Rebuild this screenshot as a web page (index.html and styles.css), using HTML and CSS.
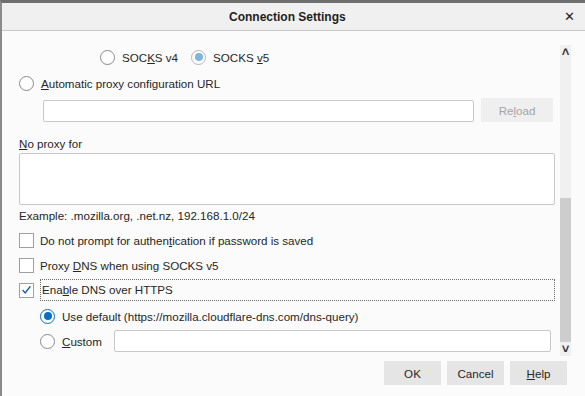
FILE: index.html
```html
<!DOCTYPE html>
<html lang="en">
<head>
  <meta charset="UTF-8">
  <title>Connection Settings</title>
  <link rel="stylesheet" href="styles.css">
</head>
<body>
  <div class="window">
    <header class="titlebar">
      <span class="title">Connection Settings</span>
      <span class="close">&#x2715;</span>
    </header>

    <div class="pane">
      <div class="content">
        <div class="row socks">
          <span class="radio"></span>
          <span class="label">SOC<u>K</u>S v4</span>
          <span class="radio checked disabled"></span>
          <span class="label">SOCKS <u>v</u>5</span>
        </div>

        <div class="row">
          <span class="radio"></span>
          <span class="label"><u>A</u>utomatic proxy configuration URL</span>
        </div>

        <div class="url-row">
          <div class="field url"></div>
          <button class="btn disabled">Re<u>l</u>oad</button>
        </div>

        <div class="caption"><u>N</u>o proxy for</div>
        <div class="field area"></div>
        <div class="hint">Example: .mozilla.org, .net.nz, 192.168.1.0/24</div>

        <div class="row check-row">
          <span class="checkbox"></span>
          <span class="label">Do not prompt for authen<u>t</u>ication if password is saved</span>
        </div>

        <div class="row check-row">
          <span class="checkbox"></span>
          <span class="label">Proxy <u>D</u>NS when using SOCKS v5</span>
        </div>

        <div class="row check-row doh">
          <span class="checkbox">
            <svg width="14" height="14" viewBox="0 0 14 14"><path d="M2.8 7 L5.6 10.2 L11.2 3" fill="none" stroke="#1a5fb4" stroke-width="1.5"/></svg>
          </span>
          <span class="label focused">Ena<u>b</u>le DNS over HTTPS</span>
        </div>

        <div class="row sub">
          <span class="radio checked"></span>
          <span class="label">Use default (https://mozilla.cloudflare-dns.com/dns-query)</span>
        </div>

        <div class="row sub">
          <span class="radio"></span>
          <span class="label custom-label"><u>C</u>ustom</span>
          <div class="field custom"></div>
        </div>
      </div>

      <div class="scrollbar">
        <span class="arrow">&#x2C4;</span>
        <div class="thumb"></div>
        <span class="arrow">&#x2C5;</span>
      </div>
    </div>

    <footer class="buttons">
      <button class="btn">OK</button>
      <button class="btn">Cancel</button>
      <button class="btn"><u>H</u>elp</button>
    </footer>
  </div>
</body>
</html>
```

FILE: styles.css
```css
* {
  margin: 0;
  padding: 0;
  box-sizing: border-box;
}
html, body {
  width: 585px;
  height: 396px;
  overflow: hidden;
  background-color: #fbfbfb;
  font-family: "Liberation Sans", Arial, sans-serif;
  font-size: 11.6px;
  color: #262626;
}
u {
  text-decoration-thickness: 1px;
  text-underline-offset: 1px;
}
.window {
  height: 396px;
  border-top: 3px solid #6f6f6f;
  border-left: 2px solid #8a8a8a;
  background-color: #fbfbfb;
}
.titlebar {
  height: 28px;
  background-color: #f0f0f0;
  border-bottom: 1px solid #c9c9c9;
  display: flex;
  align-items: center;
  padding-left: 227px;
  padding-right: 10px;
}
.title {
  font-weight: bold;
  font-size: 12px;
  color: #1e1e1e;
  flex: 1;
}
.close {
  font-size: 13px;
  color: #222;
}
.pane {
  height: 325px;
  display: flex;
}
.content {
  flex: 1;
  padding-left: 17px;
  padding-top: 15px;
}
.row {
  height: 22px;
  display: flex;
  align-items: center;
  margin-bottom: 4px;
}
.socks {
  padding-left: 81px;
  margin-bottom: 4px;
}
.socks .label {
  margin-right: 13px;
}
.radio {
  width: 15px;
  height: 15px;
  border: 1px solid #8a8a8a;
  border-radius: 50%;
  background-color: #fff;
  margin-right: 7px;
  flex-shrink: 0;
  display: flex;
  align-items: center;
  justify-content: center;
}
.radio.checked {
  border-color: #0a6fc2;
}
.radio.checked::after {
  content: "";
  width: 8px;
  height: 8px;
  border-radius: 50%;
  background-color: #0a6fc2;
}
.radio.disabled {
  border-color: #b5b5b5;
}
.radio.disabled::after {
  background-color: #7fb4dc;
}
.url-row {
  display: flex;
  align-items: center;
  padding-left: 24px;
  margin-top: 1px;
  height: 24px;
}
.field {
  background-color: #fff;
  border: 1px solid #c8c8c8;
  border-radius: 2px;
}
.url {
  width: 431px;
  height: 22px;
  margin-top: 1px;
}
.btn {
  height: 24px;
  width: 57px;
  border: none;
  background-color: #e5e5e5;
  font-family: inherit;
  font-size: 11.6px;
  color: #262626;
}
.btn.disabled {
  width: 72px;
  margin-left: 7px;
  background-color: #efefef;
  color: #a4a4a4;
}
.caption {
  margin-top: 12px;
  height: 19px;
  line-height: 19px;
}
.area {
  width: 536px;
  height: 52px;
}
.hint {
  margin-top: 1px;
  height: 20px;
  line-height: 20px;
  margin-bottom: 3px;
}
.check-row {
  margin-bottom: 3px;
}
.doh {
  margin-top: 2px;
  margin-bottom: 4px;
}
.checkbox {
  width: 15px;
  height: 15px;
  border: 1px solid #a0a0a0;
  background-color: #fff;
  margin-right: 6px;
  flex-shrink: 0;
  display: flex;
  align-items: center;
  justify-content: center;
}
.focused {
  flex: 1;
  margin-right: 3px;
  height: 22px;
  line-height: 20px;
  border: 1px dotted #6a6a6a;
  padding-left: 1px;
}
.sub {
  padding-left: 21px;
  margin-bottom: 3px;
}
.custom-label {
  width: 52px;
}
.custom {
  width: 437px;
  height: 22px;
}
.scrollbar {
  width: 11px;
  margin-top: 14px;
  margin-right: 14px;
  margin-left: 2px;
  height: 311px;
  background-color: #f0f0f0;
  display: flex;
  flex-direction: column;
  align-items: center;
}
.arrow {
  height: 14px;
  line-height: 14px;
  font-size: 13px;
  font-weight: bold;
  color: #333;
}
.thumb {
  width: 11px;
  margin-top: auto;
  height: 144px;
  background-color: #cdcdcd;
}
.buttons {
  display: flex;
  justify-content: flex-end;
  gap: 6px;
  padding-right: 18px;
  padding-top: 5px;
}
```
